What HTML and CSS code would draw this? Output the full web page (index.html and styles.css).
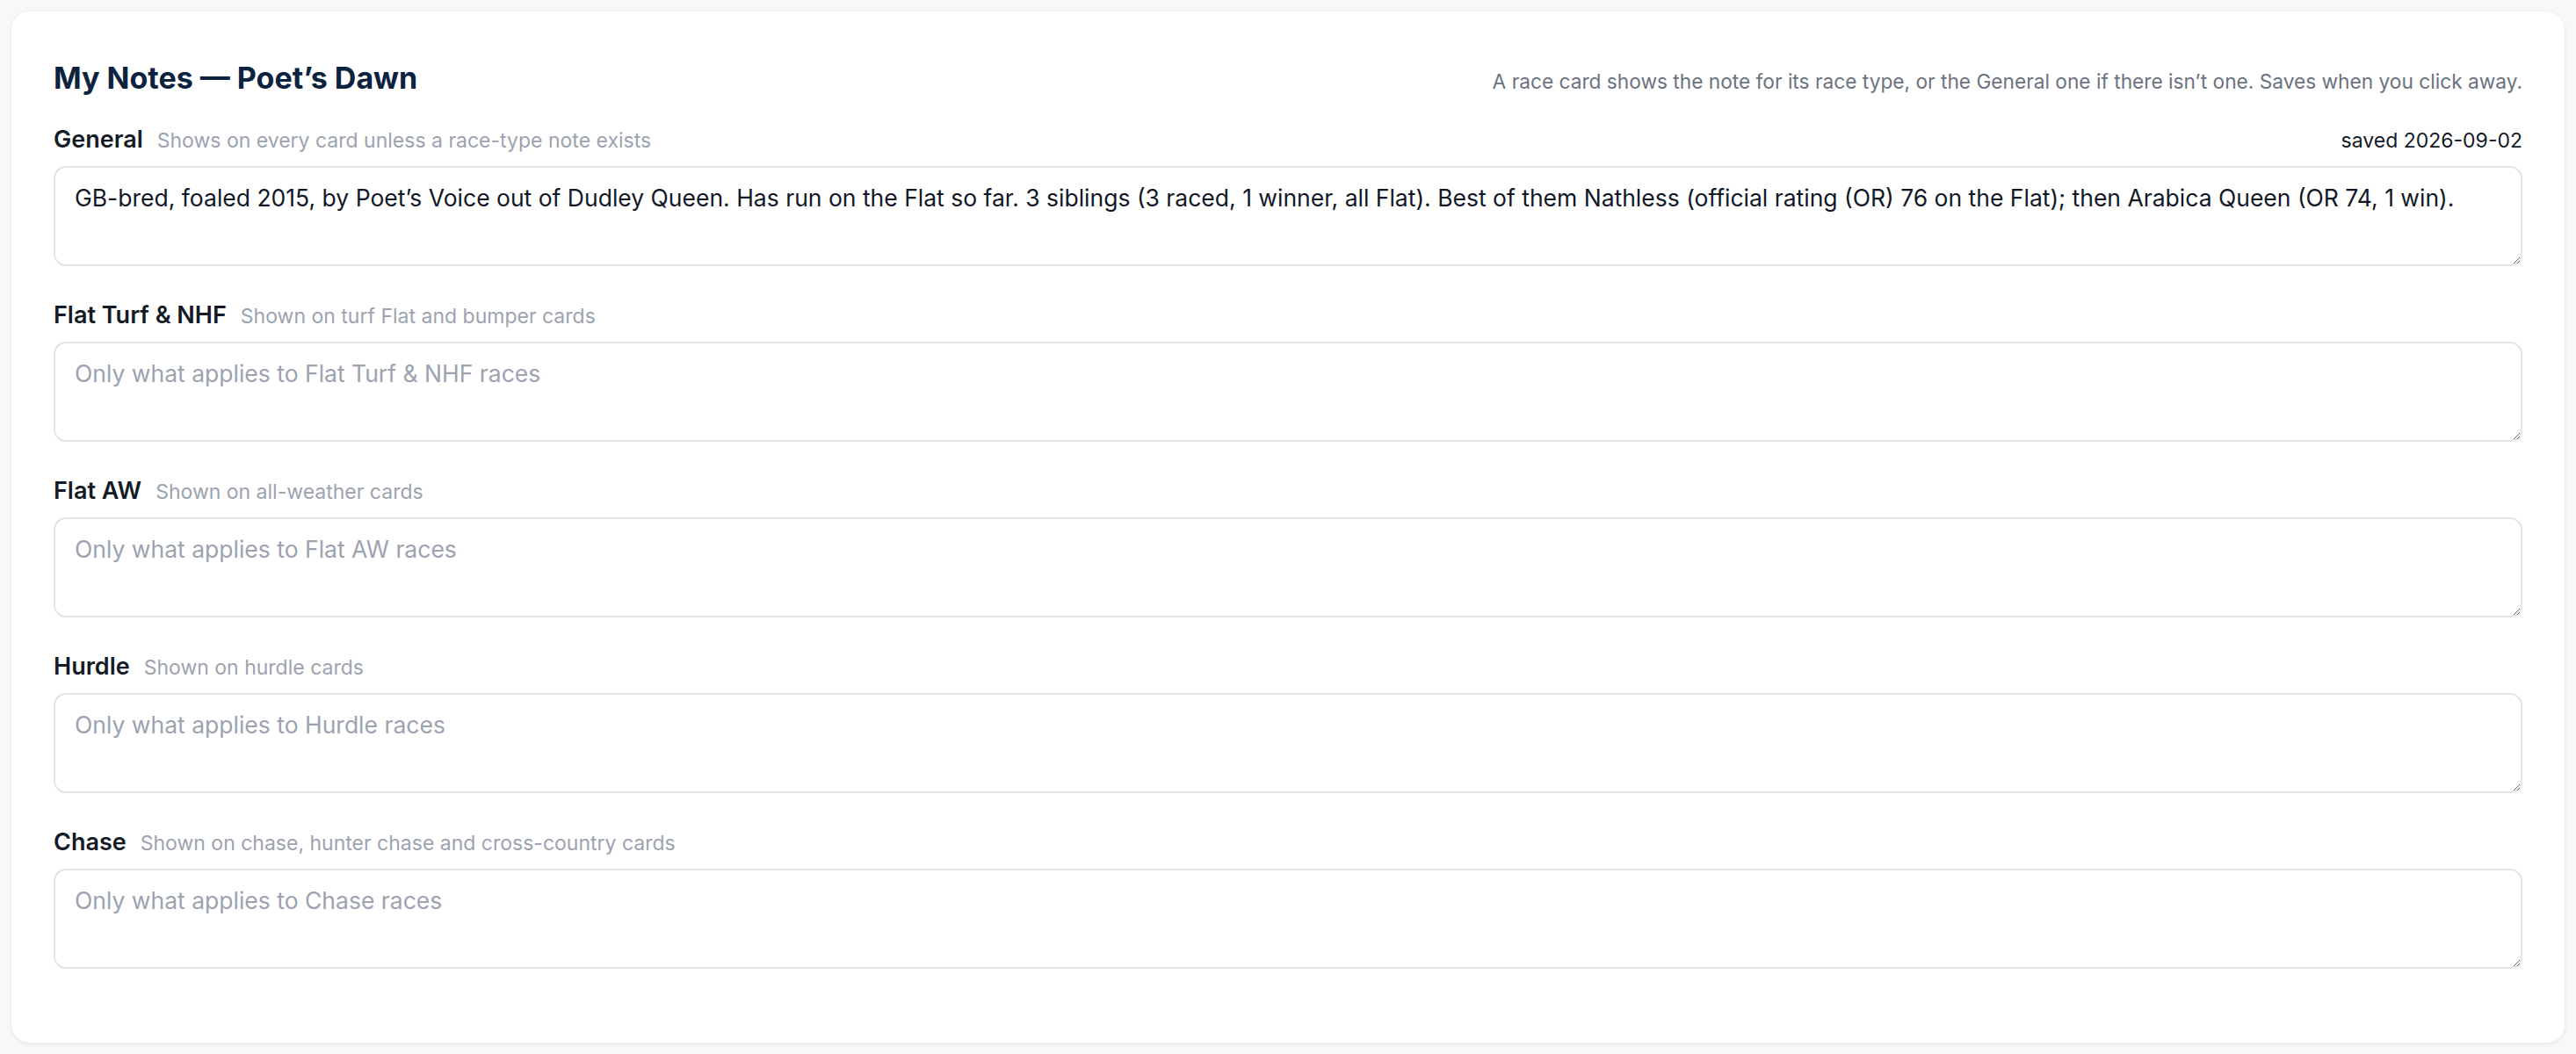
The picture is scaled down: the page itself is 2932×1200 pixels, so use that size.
FILE: index.html
```html
<!DOCTYPE html>
<html lang="en">
<head>
    <meta charset="UTF-8">
    <meta name="viewport" content="width=device-width, initial-scale=1.0">
    <title>My Notes — Poet’s Dawn</title>
    <link rel="stylesheet" href="styles.css">
</head>
<body>

    <div class="notes-card">
        <div class="notes-header">
            <h2 class="notes-title">My Notes — Poet’s Dawn</h2>
            <p class="notes-help">A race card shows the note for its race type, or the General one if there isn’t one. Saves when you click away.</p>
        </div>

        <!-- General note: used when a race type has nothing of its own -->
        <div class="note-block">
            <div class="note-label-row">
                <label class="note-label" for="note-general">General</label>
                <span class="note-hint">Shows on every card unless a race-type note exists</span>
                <span class="note-saved">saved 2026-09-02</span>
            </div>
            <textarea id="note-general" class="note-input">GB-bred, foaled 2015, by Poet’s Voice out of Dudley Queen. Has run on the Flat so far. 3 siblings (3 raced, 1 winner, all Flat). Best of them Nathless (official rating (OR) 76 on the Flat); then Arabica Queen (OR 74, 1 win).</textarea>
        </div>

        <div class="note-block">
            <div class="note-label-row">
                <label class="note-label" for="note-flat-turf">Flat Turf &amp; NHF</label>
                <span class="note-hint">Shown on turf Flat and bumper cards</span>
            </div>
            <textarea id="note-flat-turf" class="note-input" placeholder="Only what applies to Flat Turf &amp; NHF races"></textarea>
        </div>

        <div class="note-block">
            <div class="note-label-row">
                <label class="note-label" for="note-flat-aw">Flat AW</label>
                <span class="note-hint">Shown on all-weather cards</span>
            </div>
            <textarea id="note-flat-aw" class="note-input" placeholder="Only what applies to Flat AW races"></textarea>
        </div>

        <div class="note-block">
            <div class="note-label-row">
                <label class="note-label" for="note-hurdle">Hurdle</label>
                <span class="note-hint">Shown on hurdle cards</span>
            </div>
            <textarea id="note-hurdle" class="note-input" placeholder="Only what applies to Hurdle races"></textarea>
        </div>

        <div class="note-block">
            <div class="note-label-row">
                <label class="note-label" for="note-chase">Chase</label>
                <span class="note-hint">Shown on chase, hunter chase and cross-country cards</span>
            </div>
            <textarea id="note-chase" class="note-input" placeholder="Only what applies to Chase races"></textarea>
        </div>
    </div>

</body>
</html>
```

FILE: styles.css
```css
body {
    margin: 0;
    padding: 12px;
    background-color: #f7f8fa;
    font-family: 'Inter', 'Liberation Sans', sans-serif;
    color: #141a26;
}

.notes-card {
    background-color: #fff;
    border: 1px solid #eef0f3;
    border-radius: 22px;
    box-shadow: 0 2px 4px rgba(15, 23, 42, 0.06);
    padding: 56px 48px 48px;
}

.notes-header {
    display: flex;
    justify-content: space-between;
    align-items: baseline;
    margin-bottom: 31px;
}

.notes-title {
    margin: 0;
    font-size: 34px;
    font-weight: 700;
    line-height: 1.2;
    color: #0c2340;
}

.notes-help {
    margin: 0;
    font-size: 22.7px;
    color: #6b7280;
}

.note-block {
    margin-bottom: 38px;
}

.note-block:last-child {
    margin-bottom: 36px;
}

.note-label-row {
    display: flex;
    align-items: baseline;
    gap: 16px;
    margin-bottom: 12px;
}

.note-label {
    font-size: 27px;
    font-weight: 600;
    line-height: 36px;
    color: #141a26;
}

.note-hint {
    font-size: 23px;
    color: #9ca3af;
}

.note-saved {
    margin-left: auto;
    font-size: 23px;
    color: #141a26;
}

.note-input {
    display: block;
    width: 100%;
    height: 114px;
    box-sizing: border-box;
    padding: 15px 22px;
    border: 2px solid #e4e4ea;
    border-radius: 14px;
    font-family: 'Inter', 'Liberation Sans', sans-serif;
    font-size: 26.5px;
    line-height: 1.5;
    color: #111827;
    resize: vertical;
    outline: none;
}

.note-input::placeholder {
    color: #9ca3af;
}
```
